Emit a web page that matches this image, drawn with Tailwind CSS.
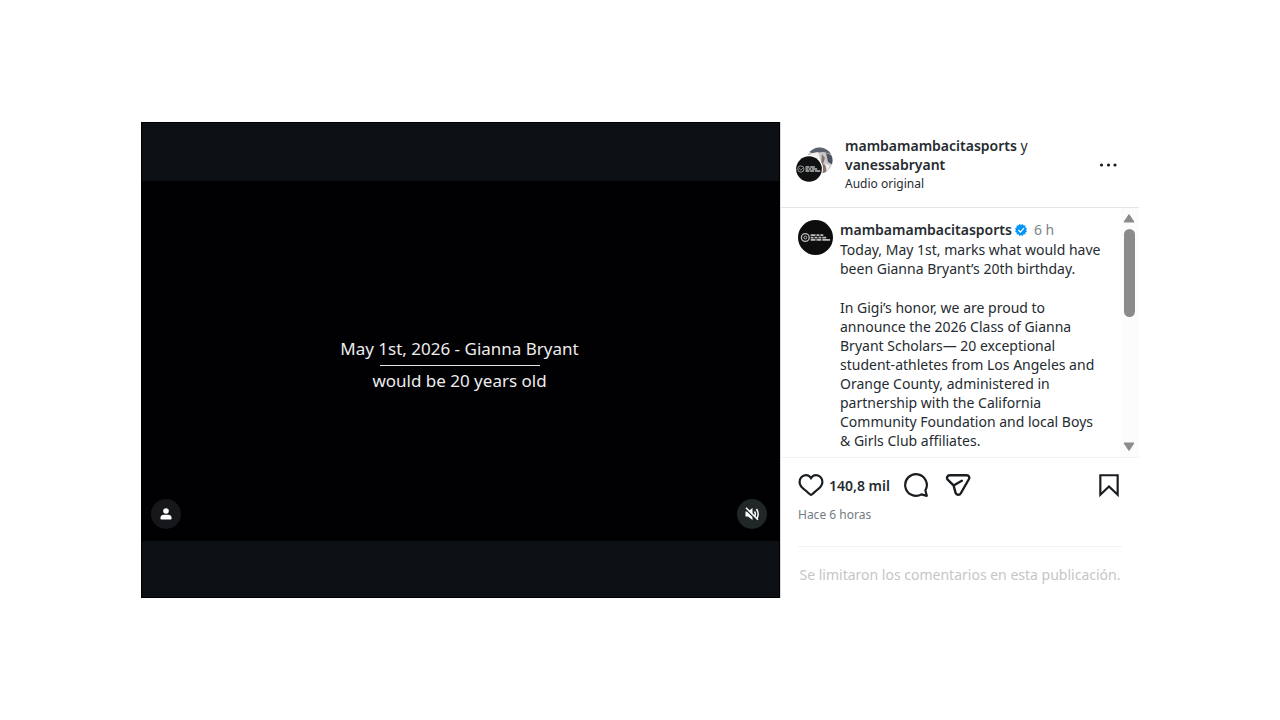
<!DOCTYPE html>
<html lang="es">
<head>
    <meta charset="UTF-8">
    <meta name="viewport" content="width=device-width, initial-scale=1.0">
    <title>mambamambacitasports</title>
    <script src="https://cdn.jsdelivr.net/npm/@tailwindcss/browser@4"></script>
</head>
<body class="bg-white font-['Noto_Sans','Open_Sans',sans-serif] text-[#262b30]">
    <main class="flex min-h-screen items-center justify-center">
        <article class="flex w-full max-w-[998px]">
            <!-- Video -->
            <section class="flex flex-1 flex-col border border-black bg-[#0c1014] pt-[58px] pb-14" aria-label="Video">
                <div class="relative flex flex-1 flex-col items-center justify-center bg-[#010003] pt-2 pr-[2px] text-[17px] leading-6 text-[#ededed]">
                    <p>May 1st, 2026 - Gianna Bryant</p>
                    <hr class="mt-1 mb-[3px] w-40 border-[#e4e4e4]">
                    <p>would be 20 years old</p>
                    <button type="button" aria-label="Etiquetas" class="absolute bottom-3 left-[9px] flex size-[30px] items-center justify-center rounded-full bg-[#15171a]">
                        <svg class="size-3" viewBox="0 0 12 12" fill="#fff"><circle cx="6" cy="3" r="2.8"/><path d="M.4 10.2C.4 7.8 2 6.8 4 6.8h4c2 0 3.600 1 3.600 3.400 0 .8-.5 1.300-1.300 1.300H1.700C.9 11.500.4 11 .4 10.200Z"/></svg>
                    </button>
                    <button type="button" aria-label="Activar sonido" class="absolute right-3 bottom-3 flex size-[30px] items-center justify-center rounded-full bg-[#212629]">
                        <svg class="size-[14px]" viewBox="0 0 14 14" fill="none" stroke="#fff" stroke-width="1.500"><path d="M.5 4.500h2.500L7.500 1v12L3 9.500H.5z" fill="#fff" stroke="none"/><path d="M9.500 4.500c1 1.500 1 3.500 0 5M11.500 2c2 3 2 7 0 10"/><path d="M0 1.800 12.500 14" stroke="#212629"/><path d="M1 .8 13 12.800"/></svg>
                    </button>
                </div>
            </section>

            <!-- Detalles -->
            <section class="flex w-[359px] shrink-0 flex-col border-l border-[#dcdce2] text-[14px] leading-[19px]">
                <header class="flex items-center border-b border-[#e3e5e8] py-[14px] pr-[21px] pl-[14px]">
                    <div class="relative mr-3 h-9 w-[38px]">
                        <svg class="absolute top-0 right-0 size-[27px]" viewBox="0 0 27 27">
                            <defs><clipPath id="round"><circle cx="13.500" cy="13.500" r="13"/></clipPath></defs>
                            <g clip-path="url(#round)"><rect width="27" height="27" fill="#c9c7ca"/><path d="M0 0h27v8L18 5 5 6z" fill="#59616c"/><path d="M4 7l8-2 3 9-5 5z" fill="#f0eeee"/><path d="M16 7l3 4-2 6 4 2-1 8h-6l1-10z" fill="#86726a"/><path d="M20 6l7 3v9l-5-3z" fill="#4c5360"/><path d="M19 17l5 1-3 7z" fill="#eee"/></g>
                        </svg>
                        <svg class="absolute bottom-0 left-0 size-7" viewBox="0 0 36 36">
                            <circle cx="18" cy="18" r="18" fill="#fff"/><circle cx="18" cy="18" r="16.500" fill="#101112"/>
                            <g fill="none" stroke="#bbb"><circle cx="7.500" cy="18" r="4"/><path d="M5 17l2.500 2.500L10 17"/><path d="M13.500 15.500h5m1 0h6M13.500 18h3m1 0h3m1 0h7M13.500 20.500h5m1 0h5m1 0h7" stroke-width="1.800"/></g>
                        </svg>
                    </div>
                    <div class="flex-1">
                        <p><a href="#" class="font-semibold">mambamambacitasports</a> y<br><a href="#" class="font-semibold">vanessabryant</a></p>
                        <a href="#" class="block text-[12px] leading-[19px]">Audio original</a>
                    </div>
                    <button type="button" aria-label="Más opciones" class="flex h-6 w-[20px] items-center justify-center">
                        <svg class="h-1 w-[18px]" viewBox="0 0 18 4" fill="#1a1d20"><circle cx="2.500" cy="2" r="1.600"/><circle cx="9.500" cy="2" r="1.600"/><circle cx="16" cy="2" r="1.600"/></svg>
                    </button>
                </header>

                <div class="flex border-b border-[#f1f2f4]">
                    <div class="flex flex-1 pt-3 pb-[7px] pl-[17px]">
                        <svg class="mr-[7px] size-[35px] shrink-0" viewBox="0 0 36 36">
                            <circle cx="18" cy="18" r="18" fill="#0d0d0e"/>
                            <g fill="none" stroke="#bbb"><circle cx="7.500" cy="18" r="4" stroke-width="1.400"/><circle cx="7.500" cy="18" r="1.500"/><path d="M13 15.500h5m1 0h3m1 0h3M13 18h3m1 0h3m1 0h3m1 0h4M13 20.500h5m1 0h5m1 0h8" stroke-width="1.800"/></g>
                        </svg>
                        <div>
                            <div class="mb-px flex items-center">
                                <a href="#" class="font-semibold">mambamambacitasports</a>
                                <svg class="mx-[3px] size-3" viewBox="0 0 40 40" role="img" aria-label="Verificado"><path d="M19.998 3.094 14.638 0l-2.972 5.150H5.432v6.354L0 14.640 3.094 20 0 25.359l5.432 3.137v5.905h5.975L14.638 40l5.360-3.094L25.358 40l3.232-5.600h6.162v-6.010L40 25.359 36.905 20 40 14.641l-5.248-3.030v-6.460h-6.419L25.358 0l-5.360 3.094Z" fill="#0095f6"/><path d="m11 20 7 7 12-13" fill="none" stroke="#fff" stroke-width="4"/></svg>
                                <time class="ml-1 text-[#7b838a]">6 h</time>
                            </div>
                            <p>Today, May 1st, marks what would have<br>been Gianna Bryant’s 20th birthday.</p>
                            <p class="mt-5">In Gigi’s honor, we are proud to<br>announce the 2026 Class of Gianna<br>Bryant Scholars— 20 exceptional<br>student-athletes from Los Angeles and<br>Orange County, administered in<br>partnership with the California<br>Community Foundation and local Boys<br>&amp; Girls Club affiliates.</p>
                        </div>
                    </div>
                    <!-- Barra de desplazamiento -->
                    <div class="flex w-[18px] flex-col items-center bg-[#fcfcfc] py-[5px] pr-[2px]" aria-hidden="true">
                        <svg class="h-[10px] w-3" viewBox="0 0 12 10"><path d="M6 1.500 11 9H1z" fill="#8b8b8b" stroke="#8b8b8b" stroke-linejoin="round"/></svg>
                        <div class="mt-[6px] h-[88px] w-[11px] rounded-full bg-[#8b8b8b]"></div>
                        <svg class="mt-auto h-[10px] w-3" viewBox="0 0 12 10"><path d="M6 8.500 11 1H1z" fill="#8b8b8b" stroke="#8b8b8b" stroke-linejoin="round"/></svg>
                    </div>
                </div>

                <footer class="px-[17px] pb-[14px]">
                    <div class="flex items-center pt-[14px]">
                        <button type="button" aria-label="Me gusta">
                            <svg class="size-[26px]" viewBox="0 0 24 24" fill="#1a1d20"><path d="M16.792 3.904A4.989 4.989 0 0 1 21.500 9.122c0 3.072-2.652 4.959-5.197 7.222-2.512 2.243-3.865 3.469-4.303 3.752-.477-.309-2.143-1.823-4.303-3.752C5.141 14.072 2.500 12.167 2.500 9.122a4.989 4.989 0 0 1 4.708-5.218 4.210 4.210 0 0 1 3.675 1.941c.84 1.175.98 1.763 1.120 1.763s.278-.588 1.110-1.766a4.170 4.170 0 0 1 3.679-1.938m0-2a6.040 6.040 0 0 0-4.797 2.127 6.052 6.052 0 0 0-4.787-2.127A6.985 6.985 0 0 0 .5 9.122c0 3.610 2.550 5.827 5.015 7.970.283.246.569.494.853.747l1.027.918a44.998 44.998 0 0 0 3.518 3.018 2 2 0 0 0 2.174 0 45.263 45.263 0 0 0 3.626-3.115l.922-.824c.293-.26.590-.519.885-.774 2.334-2.025 4.980-4.320 4.980-7.940a6.985 6.985 0 0 0-6.708-7.218Z"/></svg>
                        </button>
                        <span class="ml-[5px] font-semibold">140,8 mil</span>
                        <button type="button" aria-label="Comentar" class="ml-[13px]">
                            <svg class="size-[26px]" viewBox="0 0 24 24" fill="none" stroke="#1a1d20" stroke-width="2" stroke-linejoin="round"><path d="M20.656 17.008a9.993 9.993 0 1 0-3.590 3.615L22 22Z"/></svg>
                        </button>
                        <button type="button" aria-label="Compartir" class="ml-4">
                            <svg class="size-[26px]" viewBox="0 0 24 24" fill="none" stroke="#1a1d20" stroke-width="2.200" stroke-linecap="round" stroke-linejoin="round"><path d="M4.500 3h15.500c2 0 3 2 2 3.700l-7.400 12.900c-1.200 2.200-4.200 1.800-4.900-.6L7.900 12.400 2.700 7.300C1 5.500 2.200 3 4.500 3ZM7.900 12.400l7.600-4.300"/></svg>
                        </button>
                        <button type="button" aria-label="Guardar" class="ml-auto">
                            <svg class="size-[26px]" viewBox="0 0 24 24" fill="none" stroke="#1a1d20" stroke-width="2"><path d="M20 21l-8-7.560L4 21V3h16Z"/></svg>
                        </button>
                    </div>
                    <time class="mt-[7px] block text-[12px] leading-[19px] text-[#737b82]">Hace 6 horas</time>
                    <p class="mt-[22px] border-t border-[#f1f2f4] pt-[18px] text-center text-[#c5c6c8]">Se limitaron los comentarios en esta publicación.</p>
                </footer>
            </section>
        </article>
    </main>
</body>
</html>
